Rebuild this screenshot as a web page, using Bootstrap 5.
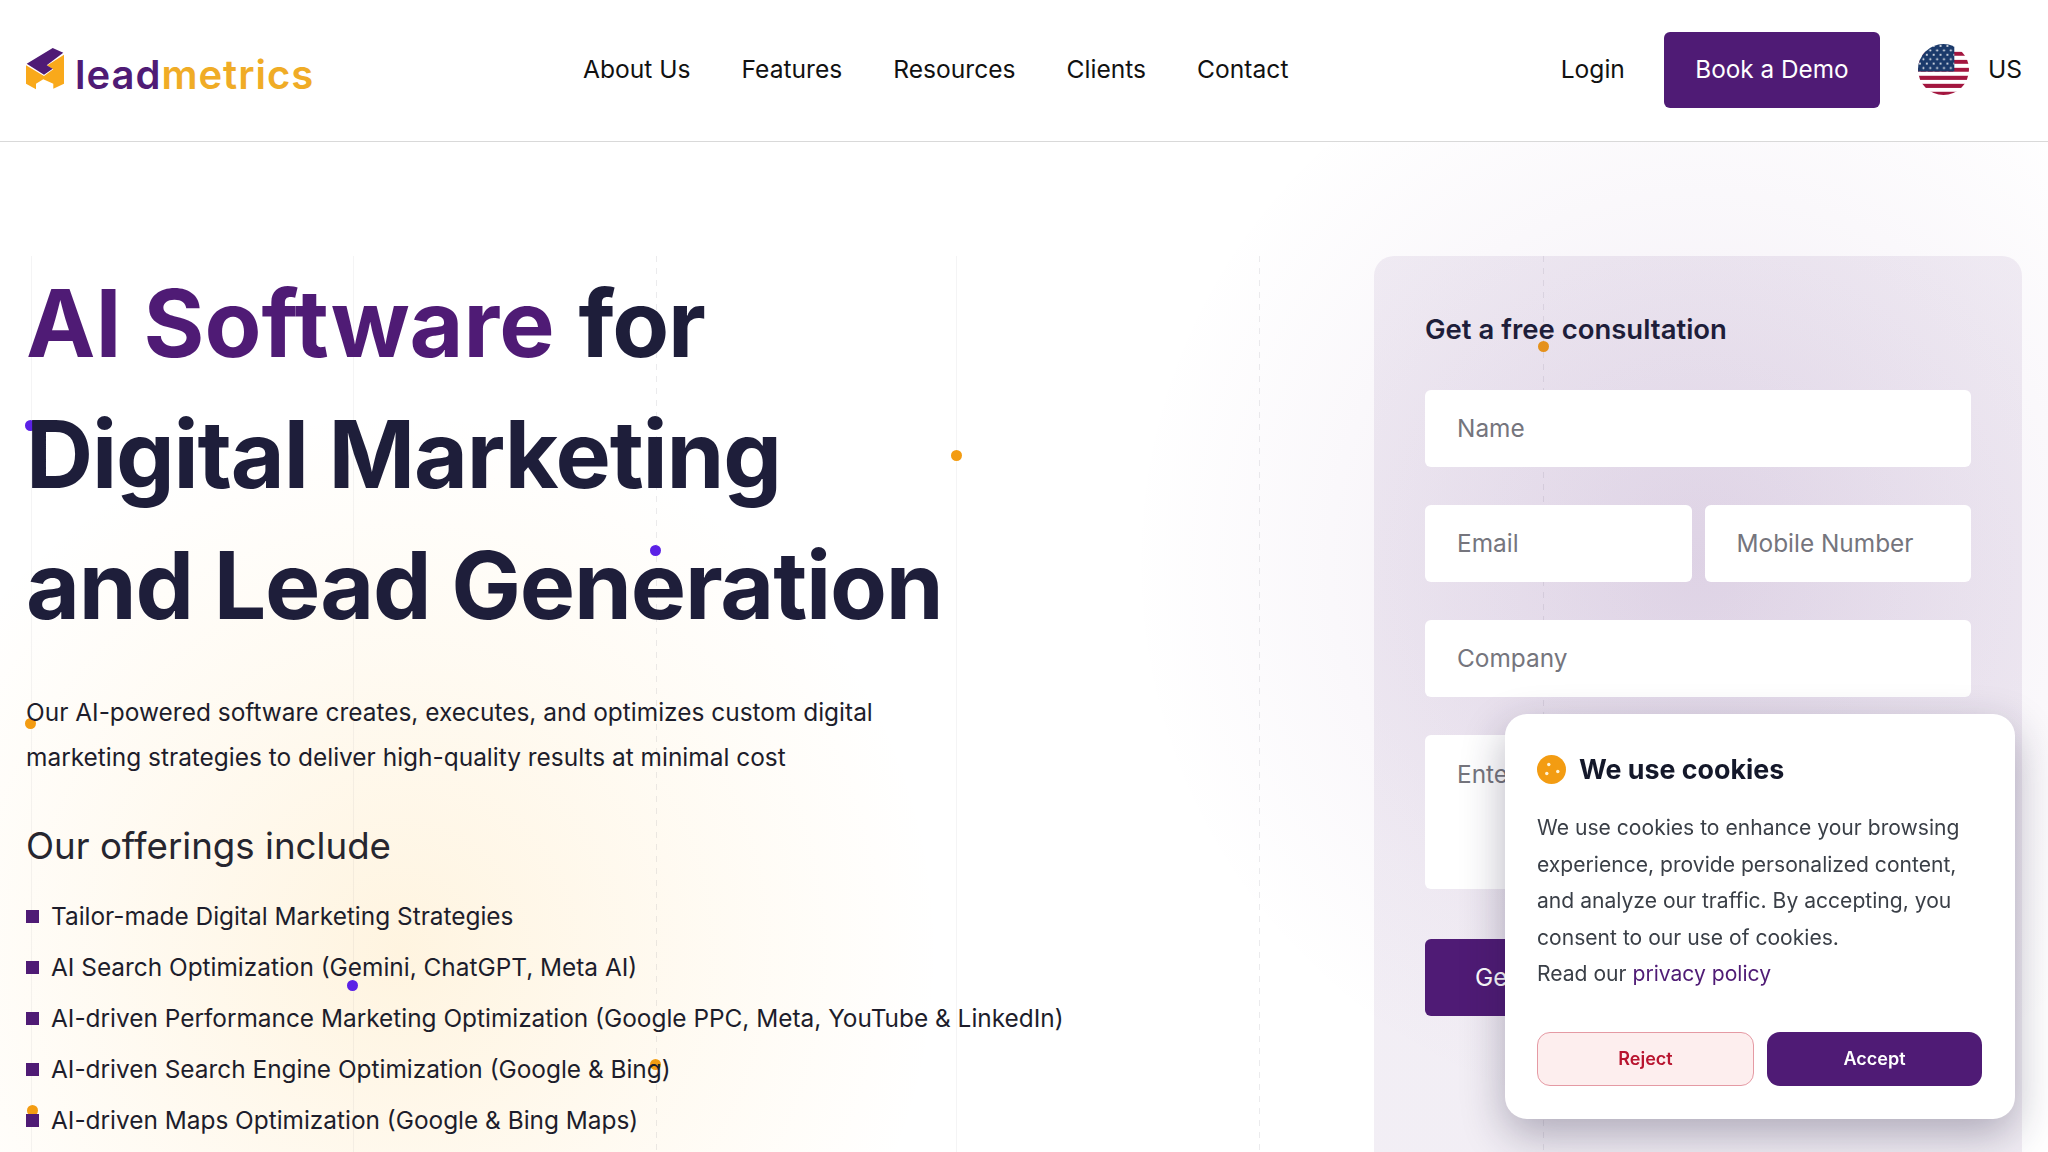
<!DOCTYPE html>
<html lang="en"><head><meta charset="utf-8"><title>Leadmetrics</title>
<link href="https://cdn.jsdelivr.net/npm/bootstrap@5.3.0/dist/css/bootstrap.min.css" rel="stylesheet">
<style>
:root{--pur:#4f1b75;--ink:#1e1e3a;--org:#f39c12;--vio:#5b21e6}
html,body{height:100%;overflow:hidden}
body{font-family:"Inter","Liberation Sans",sans-serif;color:#212529;background:#fff;position:relative}
.top-bar{height:142px;border-bottom:1px solid #d9d9d9;padding:0 26px 2px;background:#fff;position:relative;z-index:2}
.brand-link{width:290px}
.brand-word{font-size:40px;font-weight:600;letter-spacing:1px;line-height:1;margin-left:9px;margin-top:10px}
.brand-word b{font-weight:600;color:var(--pur)} .brand-word i{font-style:normal;color:#f0ac26}
.main-links{gap:51px;margin-left:267px}
.main-links a,.log-link,.loc{font-size:24.6px;color:#111;text-decoration:none}
.demo-btn{background:var(--pur);color:#fff;font-size:24.3px;width:216px;height:76px;border-radius:6px;border:0;margin:0 38px 0 39px}
.demo-btn:hover{background:var(--pur);color:#fff}
.flag-dot{width:51px;height:51px;margin-right:19px}
.glow{position:absolute;inset:142px 0 0 0;z-index:0;background:
 radial-gradient(circle 540px at 400px 810px,rgba(253,190,70,.17),rgba(253,190,70,.07) 55%,rgba(253,190,70,0) 100%),
 radial-gradient(circle 570px at 1700px 420px,rgba(110,50,140,.1),rgba(110,50,140,.04) 60%,rgba(110,50,140,0) 100%)}
.vline{position:absolute;top:256px;bottom:0;width:1px;background:rgba(60,60,80,.06);z-index:0}
.vdash{background:repeating-linear-gradient(to bottom,rgba(60,60,80,.1) 0 6px,transparent 6px 12px)}
.spark{position:absolute;width:11px;height:11px;border-radius:50%;z-index:0}
.spark-o{background:var(--org)} .spark-v{background:var(--vio)}
.hero-wrap{position:relative;z-index:1;padding:114px 26px 0}
.hero-title{font-size:93px;font-weight:700;line-height:131px;color:var(--ink);margin:0 0 39px;padding-top:2px;white-space:nowrap;letter-spacing:-1.2px}
.hero-title span{color:var(--pur);letter-spacing:0;margin-right:3px}
.hero-text{font-size:24.45px;line-height:45px;margin:0;color:#1d1d2b}
.offer-title{font-size:36.7px;font-weight:400;line-height:50px;margin:41px 0 20px;color:#26262f}
.offer-list{list-style:none;padding:0;margin:0}
.offer-list li{font-size:24.4px;line-height:51px;display:flex;align-items:center;gap:12px;white-space:nowrap;color:#1d1d2b}
.offer-list li::before{content:"";width:13px;height:13px;background:var(--pur)}
.form-panel{width:648px;height:1000px;border-radius:20px;padding:51px;background:radial-gradient(circle 420px at 320px 310px,rgba(90,40,125,.12),rgba(90,40,125,.08) 100%)}
.form-title{font-size:27.5px;font-weight:600;line-height:44px;color:var(--ink);margin:0 0 39px}
.form-panel .form-control{height:77px;border:0;border-radius:6px;font-size:24.4px;padding:0 32px 2px;margin-bottom:38px}
.form-panel textarea.form-control{height:154px;padding-top:21px;resize:none;margin-bottom:50px}
.form-panel .form-control::placeholder{color:#75757d}
.pair{gap:13px}
.send-btn{background:var(--pur);color:#fff;font-size:24.4px;height:77px;padding:0 50px;border:0;border-radius:6px}
.cookie-box{position:fixed;right:33px;bottom:33px;width:510px;height:405px;background:#fff;border-radius:22px;padding:31px 33px 0 32px;z-index:5;box-shadow:0 16px 44px rgba(30,25,60,.32)}
.cookie-head{font-size:26.8px;font-weight:700;color:#14182a;line-height:48px;gap:13px}
.cookie-copy{font-size:21.1px;line-height:36.7px;color:#3a3f47;margin:17px 0 0}
.cookie-copy a{color:var(--pur);text-decoration:none}
.cookie-copy .read{display:block;line-height:34px}
.cookie-acts{gap:13px;margin-top:41px}
.cookie-acts button{height:54px;font-size:18px;font-weight:600;border-radius:13px;flex:1 1 0;padding:0}
.btn-rej{background:#fdeeee;color:#b8142f;border:1px solid #e59aa4}
.btn-acc{background:var(--pur);color:#fff;border:0}
</style></head><body>
<nav class="top-bar d-flex align-items-center">
 <a class="brand-link d-flex align-items-center text-decoration-none" href="#">
  <svg width="40" height="44" viewBox="0 0 40 44"><path fill="#f9a91b" d="M0 17.3 18 28l9.3-6.7L21 17.5 38 6.7v29l-10.7 5v-5l-10-4.4-7.3 4.4v5.6L0 35.7z"/><path fill="#4f1b75" d="M.7 15.7 26.7 0l10.6 4.7-16.6 12.6 6 3.4L18 26.7z"/></svg>
  <span class="brand-word"><b>lead</b><i>metrics</i></span>
 </a>
 <div class="main-links d-flex">
  <a href="#">About Us</a><a href="#">Features</a><a href="#">Resources</a><a href="#">Clients</a><a href="#">Contact</a>
 </div>
 <div class="d-flex align-items-center ms-auto">
  <a class="log-link" href="#">Login</a>
  <button class="btn demo-btn">Book a Demo</button>
  <svg class="flag-dot" viewBox="0 0 52 52"><defs><clipPath id="fc"><circle cx="26" cy="26" r="26"/></clipPath><pattern id="st" width="7" height="9" patternUnits="userSpaceOnUse"><circle cx="2" cy="2" r="1" fill="#fff"/><circle cx="5.5" cy="6.5" r="1" fill="#fff"/></pattern></defs><g clip-path="url(#fc)"><rect width="52" height="52" fill="#fff"/><g fill="#a3163f"><rect y="8" width="52" height="4"/><rect y="16.2" width="52" height="4"/><rect y="24.3" width="52" height="4"/><rect y="32.4" width="52" height="4.2"/><rect y="40.6" width="52" height="4.2"/><rect y="48.7" width="52" height="4"/></g><rect width="37" height="28" fill="#1b3a6b"/><rect width="37" height="28" fill="url(#st)"/></g></svg>
  <span class="loc">US</span>
 </div>
</nav>
<div class="glow"></div>
<i class="vline" style="left:31px"></i><i class="vline" style="left:353px"></i><i class="vline vdash" style="left:656px"></i><i class="vline" style="left:956px"></i><i class="vline vdash" style="left:1259px"></i><i class="vline vdash" style="left:1543px"></i>
<i class="spark spark-v" style="left:25px;top:420px"></i><i class="spark spark-o" style="left:951px;top:450px"></i><i class="spark spark-v" style="left:650px;top:545px"></i><i class="spark spark-o" style="left:25px;top:718px"></i><i class="spark spark-v" style="left:347px;top:980px"></i><i class="spark spark-o" style="left:650px;top:1059px"></i><i class="spark spark-o" style="left:27px;top:1105px"></i><i class="spark spark-o" style="left:1538px;top:341px"></i>
<main class="hero-wrap d-flex justify-content-between">
 <section>
  <h1 class="hero-title"><span>AI Software</span> for<br>Digital Marketing<br>and Lead Generation</h1>
  <p class="hero-text">Our AI-powered software creates, executes, and optimizes custom digital<br>marketing strategies to deliver high-quality results at minimal cost</p>
  <h2 class="offer-title">Our offerings include</h2>
  <ul class="offer-list">
   <li>Tailor-made Digital Marketing Strategies</li>
   <li>AI Search Optimization (Gemini, ChatGPT, Meta AI)</li>
   <li>AI-driven Performance Marketing Optimization (Google PPC, Meta, YouTube &amp; LinkedIn)</li>
   <li>AI-driven Search Engine Optimization (Google &amp; Bing)</li>
   <li>AI-driven Maps Optimization (Google &amp; Bing Maps)</li>
  </ul>
 </section>
 <aside class="form-panel">
  <h3 class="form-title">Get a free consultation</h3>
  <input class="form-control" placeholder="Name">
  <div class="d-flex pair"><input class="form-control" placeholder="Email"><input class="form-control" placeholder="Mobile Number"></div>
  <input class="form-control" placeholder="Company">
  <textarea class="form-control" placeholder="Enter"></textarea>
  <button class="btn send-btn">Get</button>
 </aside>
</main>
<div class="cookie-box">
 <div class="cookie-head d-flex align-items-center">
  <svg width="29" height="29" viewBox="0 0 29 29"><circle cx="14.5" cy="14.5" r="14.5" fill="#f39c12"/><g fill="#fff3d6"><circle cx="11.8" cy="9.5" r="1.7"/><circle cx="9.8" cy="18.5" r="1.7"/><circle cx="20.8" cy="16.5" r="1.7"/></g></svg>
  <span>We use cookies</span>
 </div>
 <p class="cookie-copy">We use cookies to enhance your browsing<br>experience, provide personalized content,<br>and analyze our traffic. By accepting, you<br>consent to our use of cookies.<span class="read">Read our <a href="#">privacy policy</a></span></p>
 <div class="cookie-acts d-flex"><button class="btn btn-rej">Reject</button><button class="btn btn-acc">Accept</button></div>
</div>
</body></html>
